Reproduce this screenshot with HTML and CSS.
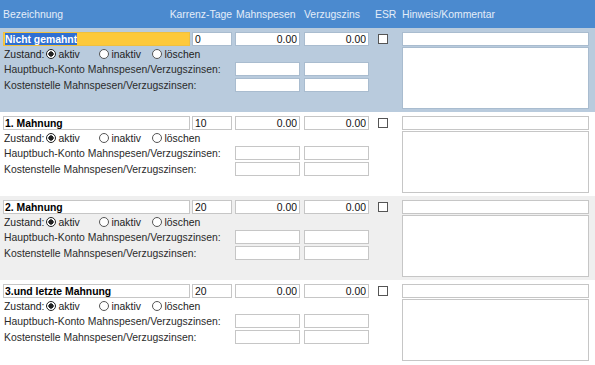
FILE: index.html
```html
<!doctype html>
<html>
    <head>
        <meta charset="UTF-8" />
        <title>Mahnstufen</title>
        <link rel="stylesheet" href="styles.css">
    </head>
    <body>
        <div class="grid head">
            <span>Bezeichnung</span>
            <span class="h-tage">Karrenz-Tage</span>
            <span class="h-spesen">Mahnspesen</span>
            <span>Verzugszins</span>
            <span class="h-esr">ESR</span>
            <span>Hinweis/Kommentar</span>
        </div>

        <div class="grid level current">
            <div class="inp name"><span class="sel">Nicht gemahnt</span></div>
            <input class="inp tage" type="text" value="0">
            <input class="inp amount" type="text" value="0.00">
            <input class="inp amount" type="text" value="0.00">
            <input class="check" type="checkbox">
            <input class="inp note" type="text">
            <div class="state">
                Zustand:
                <label class="opt"><input class="radio" type="radio" name="z0" checked>aktiv</label>
                <label class="opt"><input class="radio" type="radio" name="z0">inaktiv</label>
                <label class="opt"><input class="radio" type="radio" name="z0">löschen</label>
            </div>
            <textarea class="inp comment"></textarea>
            <div class="label">Hauptbuch-Konto Mahnspesen/Verzugszinsen:</div>
            <input class="inp amount" type="text">
            <input class="inp amount" type="text">
            <div class="label">Kostenstelle Mahnspesen/Verzugszinsen:</div>
            <input class="inp amount" type="text">
            <input class="inp amount" type="text">
        </div>

        <div class="grid level">
            <input class="inp name" type="text" value="1. Mahnung">
            <input class="inp tage" type="text" value="10">
            <input class="inp amount" type="text" value="0.00">
            <input class="inp amount" type="text" value="0.00">
            <input class="check" type="checkbox">
            <input class="inp note" type="text">
            <div class="state">
                Zustand:
                <label class="opt"><input class="radio" type="radio" name="z1" checked>aktiv</label>
                <label class="opt"><input class="radio" type="radio" name="z1">inaktiv</label>
                <label class="opt"><input class="radio" type="radio" name="z1">löschen</label>
            </div>
            <textarea class="inp comment"></textarea>
            <div class="label">Hauptbuch-Konto Mahnspesen/Verzugszinsen:</div>
            <input class="inp amount" type="text">
            <input class="inp amount" type="text">
            <div class="label">Kostenstelle Mahnspesen/Verzugszinsen:</div>
            <input class="inp amount" type="text">
            <input class="inp amount" type="text">
        </div>

        <div class="grid level alt">
            <input class="inp name" type="text" value="2. Mahnung">
            <input class="inp tage" type="text" value="20">
            <input class="inp amount" type="text" value="0.00">
            <input class="inp amount" type="text" value="0.00">
            <input class="check" type="checkbox">
            <input class="inp note" type="text">
            <div class="state">
                Zustand:
                <label class="opt"><input class="radio" type="radio" name="z2" checked>aktiv</label>
                <label class="opt"><input class="radio" type="radio" name="z2">inaktiv</label>
                <label class="opt"><input class="radio" type="radio" name="z2">löschen</label>
            </div>
            <textarea class="inp comment"></textarea>
            <div class="label">Hauptbuch-Konto Mahnspesen/Verzugszinsen:</div>
            <input class="inp amount" type="text">
            <input class="inp amount" type="text">
            <div class="label">Kostenstelle Mahnspesen/Verzugszinsen:</div>
            <input class="inp amount" type="text">
            <input class="inp amount" type="text">
        </div>

        <div class="grid level">
            <input class="inp name" type="text" value="3.und letzte Mahnung">
            <input class="inp tage" type="text" value="20">
            <input class="inp amount" type="text" value="0.00">
            <input class="inp amount" type="text" value="0.00">
            <input class="check" type="checkbox">
            <input class="inp note" type="text">
            <div class="state">
                Zustand:
                <label class="opt"><input class="radio" type="radio" name="z3" checked>aktiv</label>
                <label class="opt"><input class="radio" type="radio" name="z3">inaktiv</label>
                <label class="opt"><input class="radio" type="radio" name="z3">löschen</label>
            </div>
            <textarea class="inp comment"></textarea>
            <div class="label">Hauptbuch-Konto Mahnspesen/Verzugszinsen:</div>
            <input class="inp amount" type="text">
            <input class="inp amount" type="text">
            <div class="label">Kostenstelle Mahnspesen/Verzugszinsen:</div>
            <input class="inp amount" type="text">
            <input class="inp amount" type="text">
        </div>
    </body>
</html>
```

FILE: styles.css
```css
body {
    margin: 0;
    background: #fff;
    color: #222;
    font-family: "Liberation Sans", Arial, sans-serif;
    font-size: 10.4px;
    overflow: hidden;
}

.grid {
    display: grid;
    grid-template-columns: 189px 43px 69px 74px 24px 187px;
    padding-left: 3px;
}

.head {
    height: 28px;
    align-items: center;
    background: #4b8acf;
    color: #e4edf9;
}

.h-tage {
    justify-self: end;
    white-space: nowrap;
    margin-right: 3px;
}

.h-spesen {
    margin-left: 1px;
}

.h-esr {
    margin-left: -3px;
}

.level {
    box-sizing: border-box;
    height: 84px;
    padding-top: 4px;
    grid-template-rows: 14px 14px 15px 15px auto;
    row-gap: 1px;
    align-content: start;
}

.current {
    background: #b9cbdd;
}

.alt {
    background: #efefef;
}

.inp {
    box-sizing: border-box;
    height: 14px;
    margin: 0;
    padding: 0 2px;
    border: 1px solid #c6c6c6;
    background: #fff;
    color: #111;
    font: inherit;
    outline: none;
}

.current .inp {
    border-color: #a9bccf;
}

.name {
    width: 187px;
    padding-left: 1px;
    font-weight: bold;
    color: #000;
}

div.name {
    display: flex;
    align-items: stretch;
    white-space: nowrap;
}

.current .name {
    background: #fdc93b;
    border-color: #f0c03e;
}

.sel {
    display: flex;
    align-items: center;
    background: #2f6fd1;
    color: #fff;
}

.tage {
    width: 40px;
}

.amount {
    width: 65px;
    text-align: right;
}

.note {
    width: 187px;
}

.check {
    appearance: none;
    box-sizing: border-box;
    width: 10px;
    height: 10px;
    margin: 0;
    align-self: center;
    border: 1px solid #555;
    background: #fff;
}

.state {
    grid-column: 1 / span 3;
    display: flex;
    align-items: center;
    padding-left: 1px;
    white-space: nowrap;
}

.opt {
    display: inline-flex;
    align-items: center;
    width: 53px;
}

.state .opt:first-child {
    margin-left: 2px;
}

.radio {
    appearance: none;
    box-sizing: border-box;
    width: 10px;
    height: 10px;
    margin: 0 2px 0 0;
    border: 1px solid #555;
    border-radius: 50%;
    background: #fff;
}

.radio:checked {
    border-color: #222;
    background: radial-gradient(circle, #222 0 2.4px, #fff 2.9px);
}

.label {
    grid-column: 1 / span 2;
    display: flex;
    align-items: center;
    padding-left: 1px;
    color: #2b2b2b;
    white-space: nowrap;
}

.comment {
    grid-column: 6;
    grid-row: 2 / span 4;
    width: 187px;
    height: 62px;
    resize: none;
}
```
